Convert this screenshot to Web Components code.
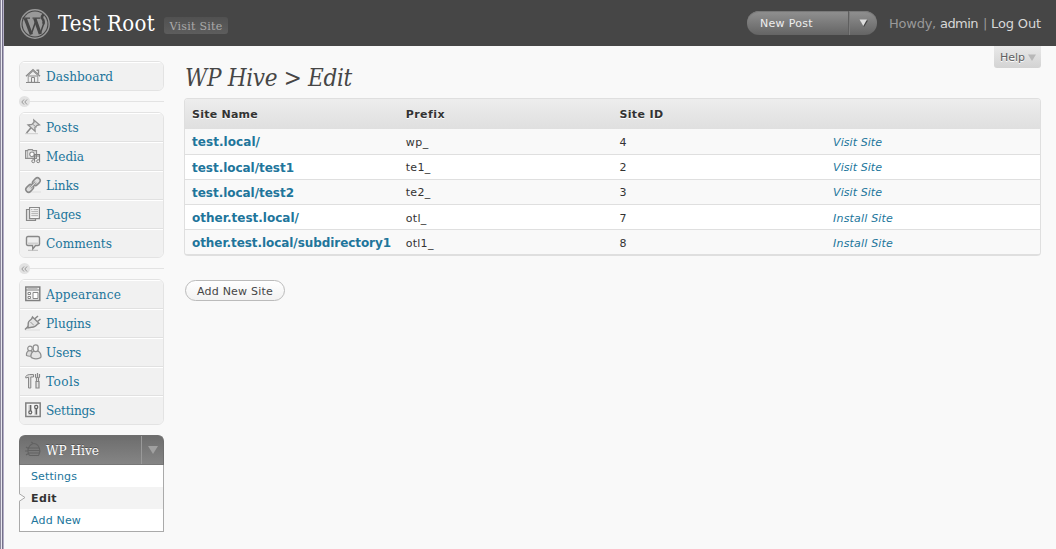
<!DOCTYPE html>
<html lang="en">
<head>
<meta charset="utf-8">
<title>WP Hive › Edit</title>
<style>
body{margin:0;background:#f9f9f9;font-family:"DejaVu Sans",Verdana,sans-serif;font-size:11px;color:#333}
</style>
</head>
<body>
<admin-page>
  <admin-header slot="header"></admin-header>
  <nav-menu slot="nav"></nav-menu>
  <help-tab slot="help"></help-tab>
  <page-title slot="main"><fit-text w="167">WP Hive &gt; Edit</fit-text></page-title>
  <site-table slot="main"></site-table>
  <pill-button slot="main"><fit-text w="76">Add New Site</fit-text></pill-button>
</admin-page>
<script>
const define = (name, html, init) => customElements.define(name, class extends HTMLElement {
  connectedCallback() {
    if (this.shadowRoot) return;
    const t = document.createElement('template');
    t.innerHTML = typeof html === 'function' ? html(this) : html;
    this.attachShadow({mode: 'open'}).append(t.content.cloneNode(true));
    if (init) init(this);
  }
});

const icons = {
  home: '<path d="M1 8.3 8 1.6l7 6.700M11.500 2.200h2v3.500" stroke="#888" stroke-width="1.400"/><path d="M3.200 7.500 8 3.200l4.800 4.300v6.800H3.200z" fill="#eee" stroke="#999"/><path d="M3.500 8h9M6.500 14V9.500h3V14" stroke="#888"/><path d="M1 14.500h14" stroke="#888"/>',
  pin: '<path d="M0 14.700h13" stroke="#ccc"/><path d="m1.500 14 4.700-5.500" stroke="#888" stroke-width="1.500"/><path d="m3 6 4-.7 2-2L8.800 1l5.700 4.800-2.400.5-2.200 2.200.2 3.800z" fill="#ddd" stroke="#909090" stroke-width="1.300"/><path d="m8 5.500 3.500 2.800" stroke="#999"/>',
  media: '<path d="M.6 2.600h2l.7-1h4l.7 1h3.500v7.800H.6z" fill="#e6e6e6" stroke="#909090" stroke-width="1.200"/><path d="M2.600 3v7" stroke="#aaa"/><circle cx="7" cy="6.300" r="2.300" fill="#fff" stroke="#909090" stroke-width="1.200"/><path d="M9.500 13V6.500h5V13M9.500 8h5" stroke="#808080" stroke-width="1.200"/><circle cx="8.300" cy="13.200" r="1.500" fill="#eee" stroke="#808080"/><circle cx="13.200" cy="13.200" r="1.500" fill="#eee" stroke="#808080"/>',
  link: '<path d="M3 15h13" stroke="#ddd"/><g transform="rotate(-45 8 8)" stroke="#8a8a8a" stroke-width="1.500"><rect x="-1" y="5.200" width="8.500" height="5.600" rx="2.800" fill="#ddd"/><rect x="8.500" y="5.200" width="8.500" height="5.600" rx="2.800" fill="#ddd"/><path d="M4 8h8" stroke-width="2.600"/><path d="M4 8h8" stroke="#ddd" stroke-width="1"/></g>',
  page: '<path d="M4.500 3.500h-3v11h9v-1.500" fill="#ddd" stroke="#888" stroke-width="1.200"/><path d="M4.600 1.500h9.800v11.200H4.600z" fill="#f7f7f7" stroke="#888" stroke-width="1.200"/><path d="M8.500 3.700H13M6.300 5.700H13M6.300 7.700H13M6.300 9.700H13M6 3.700h1.500" stroke="#aaa"/>',
  comment: '<path d="M3 15.300h10" stroke="#bbb"/><path d="M3 1.500h10q1.500 0 1.500 1.500v6q0 1.500-1.500 1.500h-2.500L7.800 14l-.3-3.500H3Q1.500 10.500 1.500 9V3Q1.500 1.500 3 1.500z" fill="#eee" stroke="#888" stroke-width="1.400"/><path d="M3 7.500h10v2H3z" fill="#d0d0d0"/>',
  appearance: '<path d="M.8 1h14v13.500H.8z" fill="#f3f3f3" stroke="#808080" stroke-width="1.500"/><path d="M1 4h14" stroke="#808080" stroke-width="1.200"/><path d="M2.500 2.500h10" stroke="#bbb"/><path d="M3 6.500h2.500v2H3zM3 10.500h2.500v2H3zM8 6.500h5v6H8z" fill="#fff" stroke="#888"/>',
  plug: '<path d="M0 15h15" stroke="#ddd"/><path d="M0 14.500 3.500 11M9.800 3.800 13 1M12.500 6.500 15.500 4" stroke="#888" stroke-width="1.500"/><path d="m7.500 2 6.500 6.300-1.500.8q-2.500 3.400-6 3.200L3 13 3.200 9q-.3-2.500 3.300-5z" fill="#e2e2e2" stroke="#888" stroke-width="1.400"/><path d="M5.500 7 9 10.500" stroke="#999"/>',
  users: '<path d="M4 6.500Q1 8 1.500 11.500q3 1.500 6 0Q8 8 6 6.500z" fill="#ddd" stroke="#909090" stroke-width="1.200"/><circle cx="5" cy="4.500" r="2.300" fill="#f1f1f1" stroke="#909090" stroke-width="1.200"/><path d="M8.800 7Q5.500 9 6 13q1 1.800 5 1.800t5-1.800Q16.300 9 13 7z" fill="#e4e4e4" stroke="#909090" stroke-width="1.300"/><rect x="8.200" y=".8" width="5" height="6.800" rx="2.500" fill="#f2f2f2" stroke="#909090" stroke-width="1.300"/>',
  tools: '<path d="M.8 5V3.500q1-2 4-2h3.700V4H5.800v11H3.500V4.200z" fill="#ddd" stroke="#888"/><path d="M10.500 1v3l1 1v3.500M14.500 1v3l-1 1v3.500M12.500 0v5" stroke="#888" stroke-width="1.200"/><path d="M11 8.500h3V15h-3z" fill="#e5e5e5" stroke="#888" stroke-width="1.200"/>',
  settings: '<path d="M.8 1h14.400v13.500H.8z" fill="#f5f5f5" stroke="#808080" stroke-width="1.500"/><path d="M3 3h4v10H3zM9 3h4v10H9z" fill="#ddd"/><path d="M5.500 3v6M11.300 7v5.500" stroke="#666" stroke-width="1.500"/><circle cx="5.300" cy="10.300" r="1.500" fill="#eee" stroke="#666" stroke-width="1.200"/><circle cx="11.200" cy="5" r="1.600" fill="#eee" stroke="#666" stroke-width="1.200"/>',
  hive: '<g stroke="#626262" stroke-width="1.100"><path d="M5 3.500Q9-.5 13 3.500M3.500 6h11M3 8.500h12M3 11h12M4.500 13.500h9M1 5l3 2M0 9h3M1 13l3-2M5 3.500Q1 8 4.500 13.500M13 3.500q3.500 5 .5 10M8 1 6 0"/></g>'
};
define('menu-icon', el => `<style>:host{display:block;width:16px;height:16px;flex:none;margin-top:-2px}svg{display:block;overflow:visible}</style>
<svg width="16" height="16" viewBox="0 0 16 16" fill="none">${icons[el.getAttribute('name')]}</svg>`);

define('admin-page', `<style>
:host{display:grid;grid-template-columns:4px 1fr;height:549px;overflow:hidden}
.edge{background:linear-gradient(90deg,#8c889c 0 1px,#e9e8f0 1px 2px,#75718a 2px 3px,#b3aec6 3px 4px)}
.body{display:grid;grid-template-columns:145px 857px;padding-left:15px;column-gap:20px}
.main{display:flex;flex-direction:column;align-items:flex-start}
</style><div class="edge"></div><div><slot name="header"></slot><div class="body"><slot name="nav"></slot><div class="main"><slot name="help"></slot><slot name="main"></slot></div></div></div>`);

define('wp-logo', `<style>:host{display:block;width:30px;height:30px}</style>
<svg width="30" height="30" viewBox="0 0 30 30"><circle cx="15" cy="15" r="14.200" fill="#464646" stroke="#999" stroke-width="1.400"/><circle cx="15" cy="15" r="12.400" fill="#999"/>
<g fill="none" stroke="#464646"><path d="M2.500 9.200h7.500M12.500 9.200h8" stroke-width="1.300"/><path d="m5.300 9.500 6 16M14.800 9.500l5.500 15.500" stroke-width="3.200"/><path d="m11.300 25 4.500-13M20.300 24.500l3.500-10.200" stroke-width="1.500"/><path d="M23.300 15q1.200-3.200-1-5.500-1.200-2.300 1.300-4" stroke-width="2.500"/></g></svg>`);

define('admin-header', `<style>
:host{display:flex;align-items:center;height:46px;background:#464646;padding:0 15px 0 16px;box-sizing:border-box;color:#ccc}
h1{margin:1px 0 0 8px;font:22px/28px "DejaVu Serif",serif;font-stretch:condensed;color:#fff}
.visit{margin:5px 0 0 9px;width:64px;height:17px;border-radius:3px;background:linear-gradient(#515151,#5d5d5d);font:11px/19px "DejaVu Serif",serif;color:#aaa;text-align:center}
.new{margin-left:auto;display:flex;width:130px;height:24px;border-radius:12px;background:linear-gradient(#919191,#646464);box-shadow:inset 0 1px 1px #777;color:#eee;line-height:25px}
.new b{font-weight:400;width:102px;padding-left:13px;box-sizing:border-box;border-right:1px solid #5f5f5f}
.new i{flex:1;display:flex;align-items:center;justify-content:center;border-left:1px solid #7b7b7b}
.user{margin-left:12px;font-size:13px;display:flex;color:#999;line-height:21px}.user a{color:#d8d8d8}.user span{width:4px;margin:0 4px 0 5px}.user a:first-of-type{margin-left:4px}
wp-logo{margin-top:2px}
</style><wp-logo></wp-logo><h1><fit-text w="97">Test Root</fit-text></h1><div class="visit"><fit-text w="53">Visit Site</fit-text></div>
<div class="new"><b><fit-text w="53">New Post</fit-text></b><i><svg width="9" height="8"><path d="M1.500 1.500h7.500L5 8z" fill="#444"/><path d="M.5.500h7.500L4.300 7z" fill="#ddd"/></svg></i></div>
<div class="user"><fit-text w="47">Howdy,</fit-text><a><fit-text w="38">admin</fit-text></a><span>|</span><a><fit-text w="50">Log Out</fit-text></a></div>`);

define('help-tab', `<style>:host{align-self:flex-end;display:flex;align-items:center;gap:3px;width:47px;height:22px;box-sizing:border-box;padding:1px 0 0 6px;border-radius:0 0 3px 3px;background:linear-gradient(#e9e9e9,#d3d3d3);color:#606060;text-shadow:0 1px #fff}</style>
<fit-text w="25">Help</fit-text><svg width="8" height="7"><path d="M0 .500h8L4 7z" fill="#b8b8b8"/></svg>`);

define('page-title', `<style>:host{display:block;height:30px;margin-left:1px;font:italic 24px/20px "DejaVu Serif",serif;font-stretch:condensed;color:#464646}</style><slot></slot>`);

define('menu-item', el => `<style>
:host{display:flex;align-items:center;box-sizing:border-box;height:29px;padding-left:5px;border-top:1px solid #fff;border-bottom:1px solid #e1e1e1;background:#f1f1f1;font:13.500px/27px "DejaVu Serif",serif;font-stretch:condensed;color:#21759b}
menu-icon{margin-right:5px}:host(:last-child){height:28px;border-bottom:0}
</style><menu-icon name="${el.getAttribute('icon')}"></menu-icon><slot></slot>`);
define('menu-group', `<style>:host{display:block;border:1px solid #e3e3e3;border-radius:6px;overflow:hidden}</style><slot></slot>`);
define('menu-separator', `<style>:host{display:flex;align-items:center;height:11px;margin:5px 0}
span{width:11px;height:11px;border-radius:6px;background:#e2e2e2;display:flex;align-items:center;justify-content:center}hr{flex:1;margin:0;border:0;height:1px;background:#e3e3e3}</style>
<span><svg width="7" height="6" fill="none" stroke="#999"><path d="M3 .500.800 3 3 5.500M6 .500 3.800 3 6 5.500"/></svg></span><hr>`);
define('plugin-menu', `<style>
:host{display:block;margin-top:10px}
.head{display:flex;align-items:center;height:30px;box-sizing:border-box;border-radius:6px 6px 0 0;background:linear-gradient(#6d6d6d,#858585);border:1px solid #6f6f6f;border-bottom-color:#777;padding-left:5px;color:#fff;font:13.500px/28px "DejaVu Serif",serif;font-stretch:condensed;text-shadow:0 -1px #555}
.head menu-icon{margin-right:5px;margin-top:0}.arrow{margin-left:auto;width:21px;height:28px;border-left:1px solid #999;display:flex;align-items:center;justify-content:center}
.list{border:1px solid #aaa;border-top:0;background:#fff;position:relative}
.list div{height:22px;line-height:23px;padding-left:11px;color:#21759b}.list .on{background:#f3f3f3;color:#333;font-weight:bold}
.notch{position:absolute;left:-1px;top:28px}
</style><div class="head"><menu-icon name="hive"></menu-icon><fit-text w="53">WP Hive</fit-text><span class="arrow"><svg width="10" height="8"><path d="M0 0h10L5 8z" fill="#a0a0a0"/></svg></span></div>
<div class="list"><div><fit-text w="46">Settings</fit-text></div><div class="on"><fit-text w="26">Edit</fit-text></div><div><fit-text w="50">Add New</fit-text></div>
<svg class="notch" width="8" height="9" fill="#f9f9f9" stroke="#aaa"><path d="M0 .500 6 4.500 0 8.500"/></svg></div>`);

const item = (i, t, w) => `<menu-item icon="${i}"><fit-text w="${w}">${t}</fit-text></menu-item>`;
define('nav-menu', `<style>:host{display:block;padding-top:15px}</style>
<menu-group>${item('home','Dashboard',67)}</menu-group><menu-separator></menu-separator>
<menu-group>${item('pin','Posts',33)}${item('media','Media',38)}${item('link','Links',33)}${item('page','Pages',35)}${item('comment','Comments',66)}</menu-group><menu-separator></menu-separator>
<menu-group>${item('appearance','Appearance',75)}${item('plug','Plugins',45)}${item('users','Users',35)}${item('tools','Tools',34)}${item('settings','Settings',49)}</menu-group>
<plugin-menu></plugin-menu>`);

const rows = [['test.local/',68,'wp_',23,4,'Visit Site',49],['test.local/test1',102,'te1_',25,2,'Visit Site',49],['test.local/test2',102,'te2_',25,3,'Visit Site',49],['other.test.local/',107,'otl_',21,7,'Install Site',60],['other.test.local/subdirectory1',199,'otl1_',28,8,'Install Site',60]];
define('site-table', `<style>
:host{display:block;width:857px;box-sizing:border-box;border:1px solid #dfdfdf;border-bottom-width:2px;border-radius:4px;overflow:hidden}
.r{display:grid;grid-template-columns:repeat(4,213.700px);height:24px;padding-left:7px;line-height:25px;border-top:1px solid #dfdfdf}
.r:nth-child(odd){background:#fff}.h{height:30px;line-height:31px;border:0;background:linear-gradient(#ededed,#dfdfdf);font-weight:bold;text-shadow:0 1px #fff}
.first{height:25px;border-top:0;line-height:27px}.low{line-height:27px}.n{font-weight:bold;font-size:12px;color:#21759b;line-height:26px}.a{font-style:italic;color:#21759b}
</style><div class="r h"><span><fit-text w="66">Site Name</fit-text></span><span><fit-text w="39">Prefix</fit-text></span><span><fit-text w="44">Site ID</fit-text></span></div><section>
${rows.map((r,i)=>`<div class="r${i?i>2?' low':'':' first'}"><span class="n"><fit-text w="${r[1]}">${r[0]}</fit-text></span><span><fit-text w="${r[3]}">${r[2]}</fit-text></span><span>${r[4]}</span><span class="a"><fit-text w="${r[6]}">${r[5]}</fit-text></span></div>`).join('')}</section><style>section .r:nth-child(even){background:#fff}section .r:nth-child(odd){background:#f9f9f9}.h.r{background:linear-gradient(#ededed,#dfdfdf)}</style>`);

define('pill-button', `<style>:host{display:flex;align-items:center;justify-content:center;box-sizing:border-box;width:100px;height:21px;padding-top:1px;margin:24px 0 0 1px;border:1px solid #bbb;border-radius:11px;background:linear-gradient(#fff,#f2f2f2);color:#464646}</style><slot></slot>`);

/* Text whose tracking is adjusted so that it fills the width in "w".
   Defined last, so that every surrounding style applies when it measures itself. */
define('fit-text', '<style>:host{display:inline-block;white-space:nowrap}</style><slot></slot>', el => {
  const n = el.textContent.length, w = el.getBoundingClientRect().width;
  el.style.letterSpacing = ((+el.getAttribute('w') - w) / n).toFixed(3) + 'px';
});
</script>
</body>
</html>
